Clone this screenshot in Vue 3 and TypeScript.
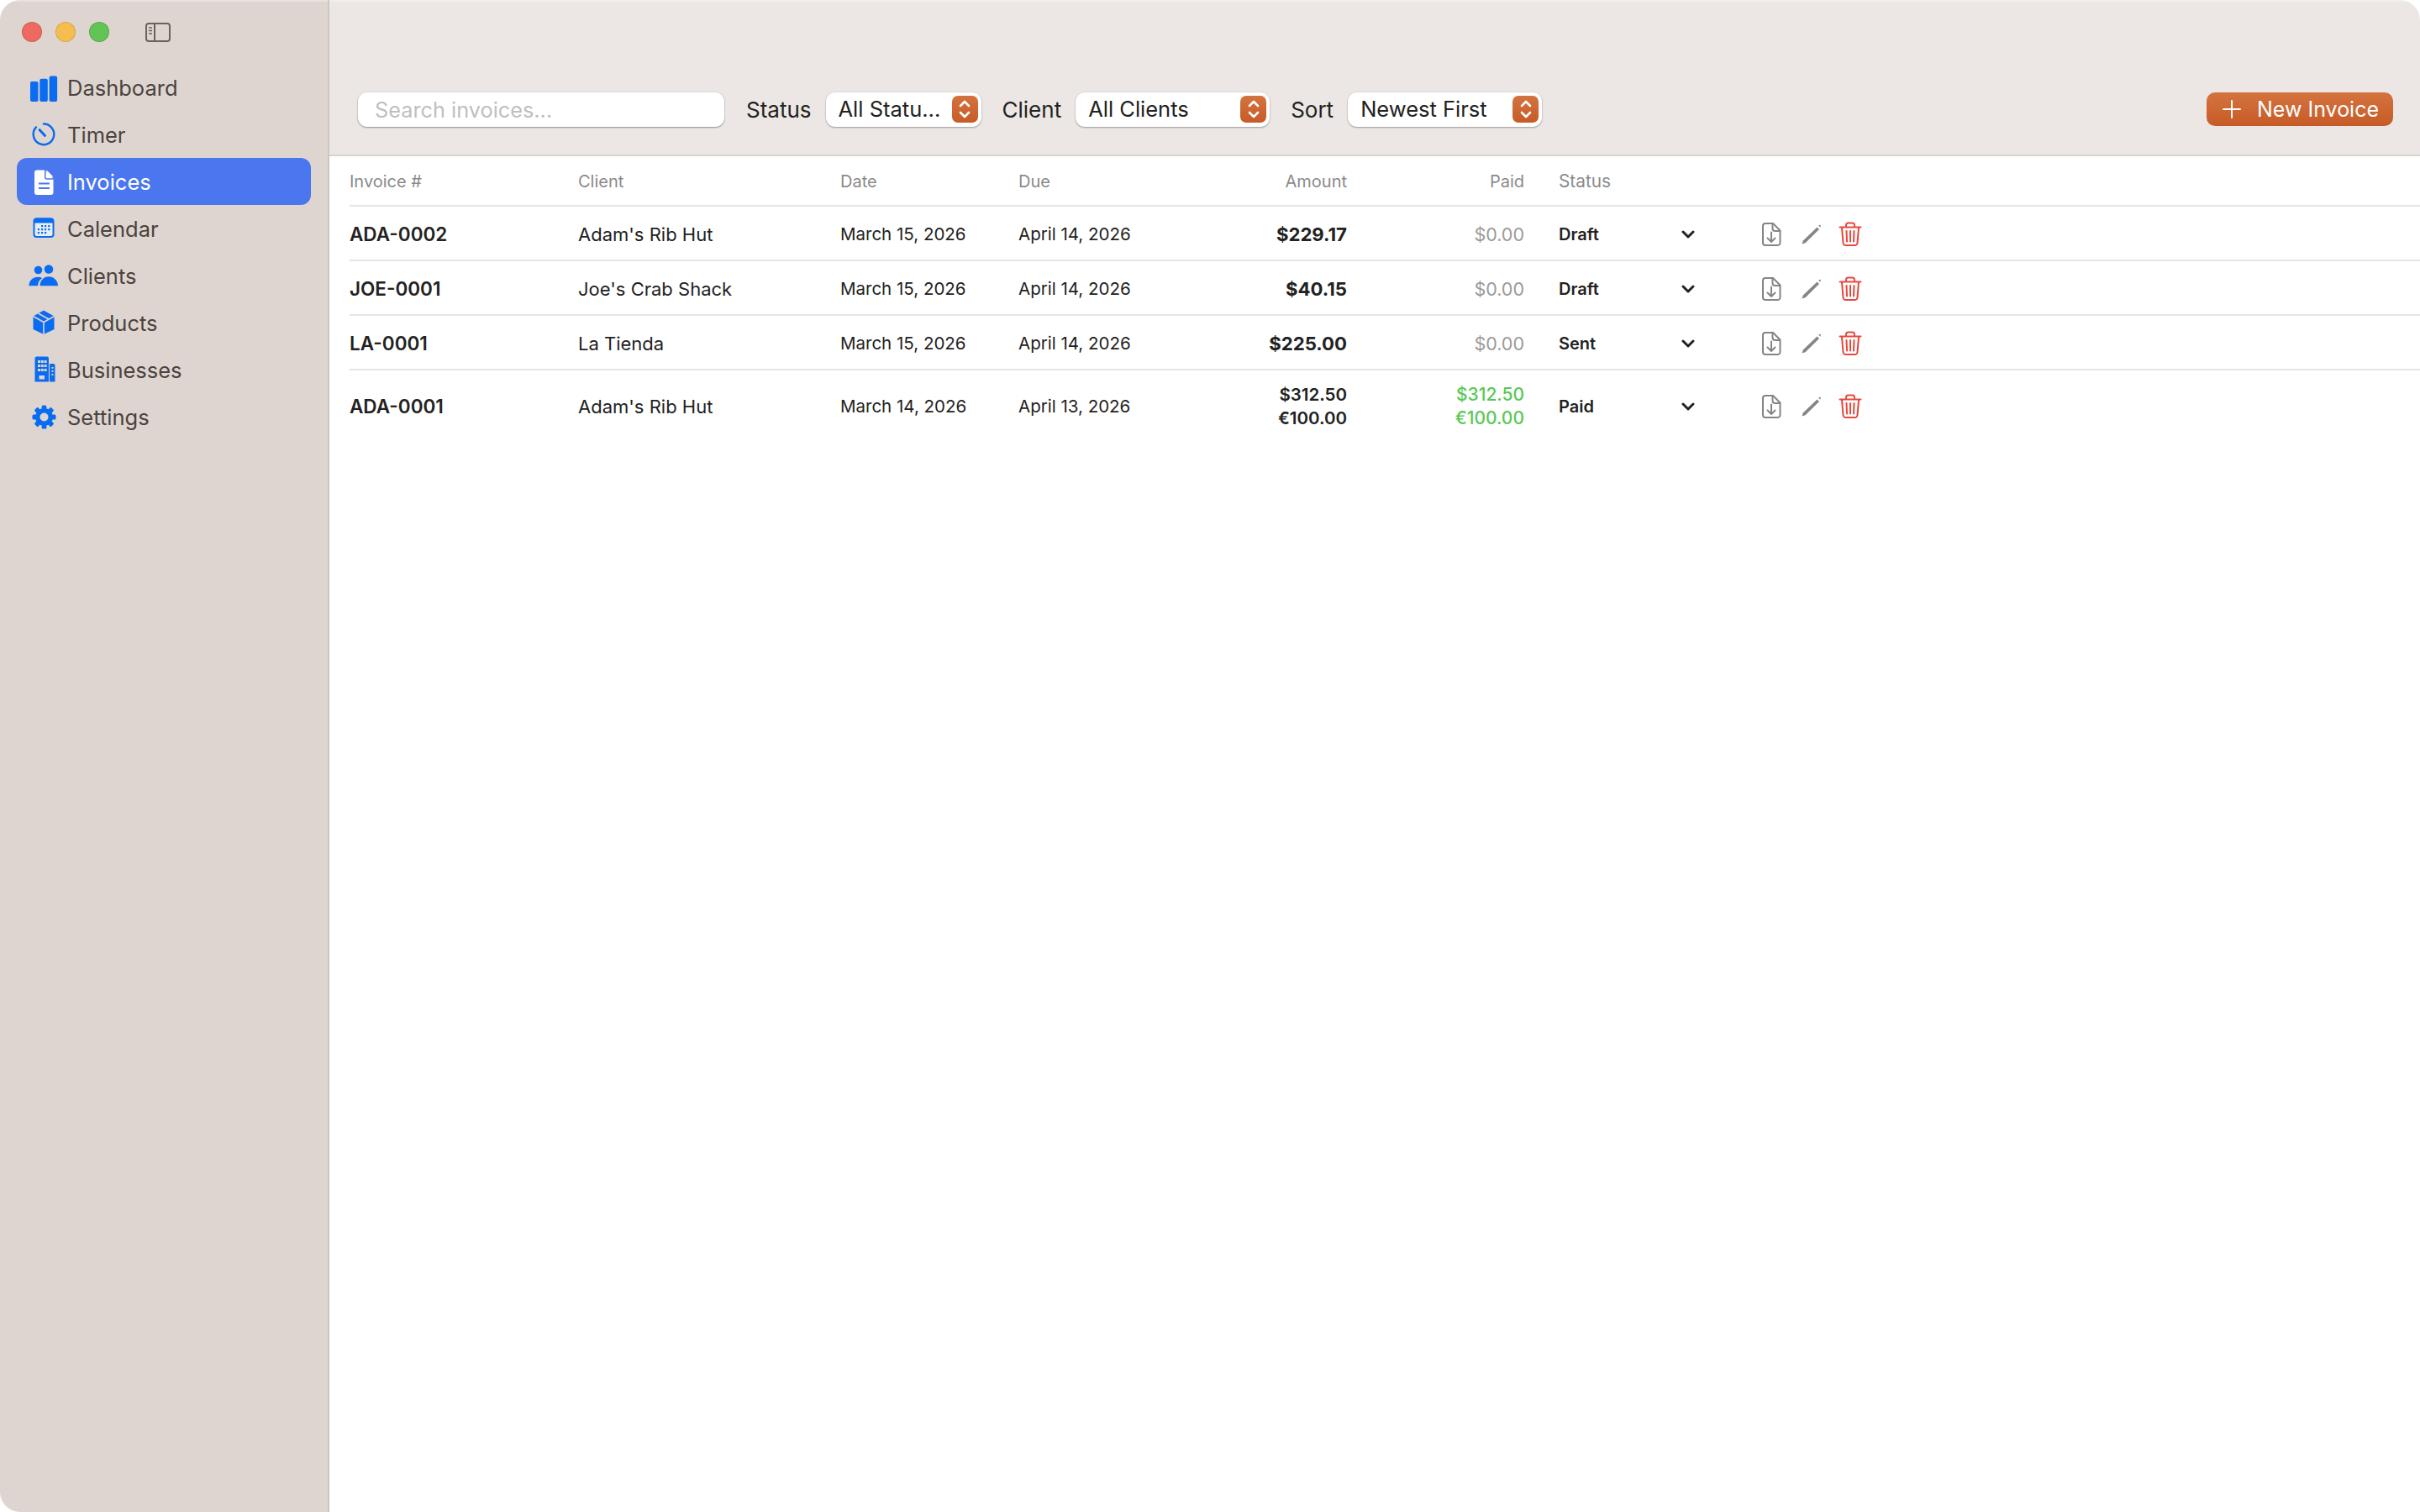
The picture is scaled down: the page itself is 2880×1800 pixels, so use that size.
<script setup lang="ts">
import { ref } from 'vue';

interface Invoice {
  id: string;
  client: string;
  date: string;
  due: string;
  amounts: string[];
  paid: string[];
  status: string;
}

const navItems = ['Dashboard', 'Timer', 'Invoices', 'Calendar', 'Clients', 'Products', 'Businesses', 'Settings'];
const active = ref('Invoices');

const filters = [
  { label: 'Status', value: 'All Statu...', kind: 'narrow' },
  { label: 'Client', value: 'All Clients', kind: 'wide' },
  { label: 'Sort', value: 'Newest First', kind: 'wide' },
];

const invoices: Invoice[] = [
  { id: 'ADA-0002', client: "Adam's Rib Hut", date: 'March 15, 2026', due: 'April 14, 2026', amounts: ['$229.17'], paid: ['$0.00'], status: 'Draft' },
  { id: 'JOE-0001', client: "Joe's Crab Shack", date: 'March 15, 2026', due: 'April 14, 2026', amounts: ['$40.15'], paid: ['$0.00'], status: 'Draft' },
  { id: 'LA-0001', client: 'La Tienda', date: 'March 15, 2026', due: 'April 14, 2026', amounts: ['$225.00'], paid: ['$0.00'], status: 'Sent' },
  { id: 'ADA-0001', client: "Adam's Rib Hut", date: 'March 14, 2026', due: 'April 13, 2026', amounts: ['$312.50', '€100.00'], paid: ['$312.50', '€100.00'], status: 'Paid' },
];
</script>

<template>
  <div class="window">
    <aside class="sidebar">
      <div class="titlebar">
        <span class="light light-close"></span>
        <span class="light light-min"></span>
        <span class="light light-max"></span>
        <svg class="toggle" width="32" height="25" viewBox="0 0 32 25" fill="none" stroke="#6b625d" stroke-width="2">
          <rect x="2" y="2" width="28" height="21" rx="3" />
          <path d="M12 2v21" />
          <path d="M5 7h4M5 10.500h4M5 14h4" stroke-width="1.500" />
        </svg>
      </div>
      <nav class="nav">
        <div v-for="item in navItems" :key="item" class="nav-item" :class="{ active: active === item }">
          <svg class="nav-icon" width="36" height="36" viewBox="0 0 36 36">
            <g v-if="item === 'Dashboard'" fill="#0a6cf0">
              <rect x="2" y="11" width="9.500" height="24" rx="2" />
              <rect x="13.300" y="7.700" width="9.500" height="27.300" rx="2" />
              <rect x="24.600" y="4.400" width="9.500" height="30.600" rx="2" />
            </g>
            <g v-else-if="item === 'Timer'" fill="none" stroke="#0a6cf0" stroke-width="2.400" stroke-linecap="round">
              <path d="M18 5.500A12.300 12.300 0 1 1 9 9.400" />
              <path d="M19.500 19.500L13 12.500" stroke-width="3" />
            </g>
            <g v-else-if="item === 'Invoices'">
              <path d="M10 4.500h9.500L29.500 14.500v16.500a3 3 0 0 1-3 3H10a3 3 0 0 1-3-3V7.500a3 3 0 0 1 3-3z" fill="#fff" />
              <path d="M21.500 4.500l8 8h-6a2 2 0 0 1-2-2z" fill="#fff" />
              <path d="M19.800 4.200V13a2 2 0 0 0 2 2h8" fill="none" stroke="#4a76ee" stroke-width="1.500" />
              <path d="M12 20.500h13M12 26h13" stroke="#4a76ee" stroke-width="2" />
            </g>
            <g v-else-if="item === 'Calendar'">
              <rect x="6.500" y="6.500" width="23" height="21.500" rx="3" fill="#e8eef8" stroke="#0a6cf0" stroke-width="2" />
              <path d="M6 9a3.500 3.500 0 0 1 3.500-3.500h17A3.500 3.500 0 0 1 30 9v2.500H6z" fill="#0a6cf0" />
              <g fill="#0a6cf0">
                <rect x="15" y="14" width="2.200" height="2.200" /><rect x="19" y="14" width="2.200" height="2.200" /><rect x="23.200" y="14" width="2.200" height="2.200" />
                <rect x="10.800" y="18" width="2.200" height="2.200" /><rect x="15" y="18" width="2.200" height="2.200" /><rect x="19" y="18" width="2.200" height="2.200" /><rect x="23.200" y="18" width="2.200" height="2.200" />
                <rect x="10.800" y="22" width="2.200" height="2.200" /><rect x="15" y="22" width="2.200" height="2.200" /><rect x="19" y="22" width="2.200" height="2.200" />
              </g>
            </g>
            <g v-else-if="item === 'Clients'" fill="#0a6cf0">
              <circle cx="11.500" cy="11.500" r="4.800" />
              <circle cx="24" cy="10.500" r="5.300" />
              <path d="M0.500 30.200c0-6 4.500-10.500 10.500-10.500 2 0 3.800.5 5.200 1.300-3 1.900-5.100 5.300-5.200 9.200z" />
              <path d="M13.500 30.200c0-6.200 4.700-11 10.500-11s11 4.800 11 11z" />
            </g>
            <g v-else-if="item === 'Products'">
              <path d="M18 3.500l12.500 7v15.500L18 32 5.500 26V10.500z" fill="#0a6cf0" />
              <path d="M5.500 10.500L18 17.500l12.500-7M18 17.500V32M11.500 7l12.500 7" fill="none" stroke="#dfd5d0" stroke-width="1.600" />
            </g>
            <g v-else-if="item === 'Businesses'">
              <path d="M7.500 4.500a2 2 0 0 1 2-2H22a2 2 0 0 1 2 2V32.500H7.500z" fill="#0a6cf0" />
              <path d="M25 11h4.500a2 2 0 0 1 2 2v19.500H25z" fill="#0a6cf0" />
              <g fill="#dfd5d0">
                <rect x="11" y="7" width="3" height="3" /><rect x="14.800" y="7" width="3" height="3" /><rect x="18.600" y="7" width="3" height="3" />
                <rect x="11" y="12" width="3" height="3" /><rect x="14.800" y="12" width="3" height="3" /><rect x="18.600" y="12" width="3" height="3" />
                <rect x="11" y="17" width="3" height="3" /><rect x="14.800" y="17" width="3" height="3" /><rect x="18.600" y="17" width="3" height="3" />
                <rect x="12.500" y="25" width="6.500" height="4.500" />
                <rect x="27.500" y="15" width="2" height="1.800" /><rect x="27.500" y="19" width="2" height="1.800" /><rect x="27.500" y="23" width="2" height="1.800" />
              </g>
            </g>
            <g v-else-if="item === 'Settings'">
              <g fill="#0a6cf0">
                <circle cx="18.500" cy="18.500" r="10.500" />
                <g v-for="a in [0, 45, 90, 135, 180, 225, 270, 315]" :key="a" :transform="`rotate(${a} 18.500 18.500)`">
                  <rect x="15.600" y="4.500" width="5.800" height="6" rx="1.500" />
                </g>
              </g>
              <circle cx="18.500" cy="18.500" r="5" fill="#dfd5d0" />
            </g>
          </svg>
          <span>{{ item }}</span>
        </div>
      </nav>
    </aside>

    <main class="content">
      <header class="toolbar">
        <input class="search" type="text" placeholder="Search invoices..." />
        <template v-for="f in filters" :key="f.label">
          <span class="filter-label">{{ f.label }}</span>
          <div class="select" :class="f.kind">
            <span class="select-value">{{ f.value }}</span>
            <span class="stepper">
              <svg width="16" height="26" viewBox="0 0 16 26" fill="none" stroke="#fff" stroke-width="2.600" stroke-linecap="round" stroke-linejoin="round">
                <path d="M3 9l5-5 5 5M3 17l5 5 5-5" />
              </svg>
            </span>
          </div>
        </template>
        <button class="new-btn">
          <svg width="22" height="22" viewBox="0 0 22 22" stroke="#fff" stroke-width="2" stroke-linecap="round"><path d="M11 1v20M1 11h20" /></svg>
          <span>New Invoice</span>
        </button>
      </header>

      <section class="table">
        <div class="row head">
          <span>Invoice #</span>
          <span>Client</span>
          <span>Date</span>
          <span>Due</span>
          <span class="right">Amount</span>
          <span class="right">Paid</span>
          <span class="status">Status</span>
        </div>
        <div v-for="inv in invoices" :key="inv.id" class="row body" :class="{ multi: inv.amounts.length > 1 }">
          <span class="inv-id">{{ inv.id }}</span>
          <span class="client">{{ inv.client }}</span>
          <span class="date">{{ inv.date }}</span>
          <span class="date">{{ inv.due }}</span>
          <div class="right amount">
            <div v-for="a in inv.amounts" :key="a">{{ a }}</div>
          </div>
          <div class="right paid" :class="{ settled: inv.status === 'Paid' }">
            <div v-for="p in inv.paid" :key="p">{{ p }}</div>
          </div>
          <span class="status status-val">{{ inv.status }}</span>
          <svg class="chev" width="16" height="10" viewBox="0 0 16 10" fill="none" stroke="#222" stroke-width="3" stroke-linecap="round" stroke-linejoin="round">
            <path d="M2 2l6 6 6-6" />
          </svg>
          <div class="actions">
            <svg width="28" height="30" viewBox="0 0 28 30" fill="none" stroke="#858585" stroke-width="2" stroke-linejoin="round" stroke-linecap="round">
              <path d="M7 2h9l8.500 8.500V25a3 3 0 0 1-3 3H7a3 3 0 0 1-3-3V5a3 3 0 0 1 3-3z" />
              <path d="M15.500 2.500V8a3 3 0 0 0 3 3h5.500" />
              <path d="M14 12.500V24M9.500 19.500L14 24l4.500-4.500" />
            </svg>
            <svg width="28" height="30" viewBox="0 0 28 30" fill="#858585">
              <path d="M21.500 6.500l2.500 2.500L7.500 25.200l-4 1.300 1.300-3.900z" />
              <path d="M23 4.500l2.200-.7.700.7-.7 2.200z" />
            </svg>
            <svg width="28" height="30" viewBox="0 0 28 30" fill="none" stroke="#e8493f" stroke-width="2" stroke-linecap="round" stroke-linejoin="round">
              <path d="M1.500 6.500h25" />
              <path d="M9 6V4a2.500 2.500 0 0 1 2.500-2.500h5A2.500 2.500 0 0 1 19 4v2" />
              <path d="M4 7l1.500 18a3 3 0 0 0 3 3h11a3 3 0 0 0 3-3L24 7" />
              <path d="M9.500 11l.5 12.500M14 11v12.500M18.500 11L18 23.500" />
            </svg>
          </div>
        </div>
      </section>
    </main>
  </div>
</template>

<style>
html,
body {
  margin: 0;
  background: #fff;
}
</style>

<style scoped>
.window {
  display: flex;
  width: 2880px;
  height: 1800px;
  overflow: hidden;
  border-radius: 24px;
  font-family: Inter, "Liberation Sans", sans-serif;
  color: #222;
  background: #fff;
}

.sidebar {
  box-sizing: border-box;
  width: 392px;
  flex-shrink: 0;
  padding: 0 20px;
  background: #dfd5d0;
  border-right: 2px solid #cbc6c2;
  box-shadow: inset 0 2px 0 rgba(255, 255, 255, 0.3);
}

.titlebar {
  display: flex;
  align-items: center;
  gap: 16px;
  height: 76px;
  padding-left: 6px;
}

.light {
  width: 24px;
  height: 24px;
  border-radius: 50%;
  box-sizing: border-box;
  border: 1px solid rgba(0, 0, 0, 0.12);
}
.light-close { background: #ee6a5f; }
.light-min { background: #f5bd4f; }
.light-max { background: #61c454; }

.toggle {
  margin-left: 26px;
}

.nav-item {
  display: flex;
  align-items: center;
  gap: 10px;
  height: 56px;
  padding-left: 14px;
  border-radius: 12px;
  font-size: 25.500px;
  color: #4a4340;
}

.nav-item.active {
  background: #4a76ee;
  color: #fff;
}

.nav-icon {
  flex-shrink: 0;
}

.content {
  flex: 1;
  min-width: 0;
}

.toolbar {
  box-sizing: border-box;
  display: flex;
  align-items: center;
  height: 186px;
  padding: 76px 32px 0 34px;
  background: #ece7e4;
  border-bottom: 2px solid #d6d1cd;
  box-shadow: inset 0 2px 0 rgba(255, 255, 255, 0.3);
}

.search {
  box-sizing: border-box;
  width: 436px;
  height: 41px;
  padding: 0 20px;
  margin-right: 26px;
  border: none;
  outline: none;
  border-radius: 11px;
  font: 25.300px Inter, "Liberation Sans", sans-serif;
  background: #fff;
  box-shadow: 0 1px 2px rgba(0, 0, 0, 0.35), 0 0 0 1px rgba(0, 0, 0, 0.04);
}

.search::placeholder {
  color: #bfbfbf;
}

.filter-label {
  font-size: 26px;
  margin-right: 17px;
  color: #222;
}

.select {
  box-sizing: border-box;
  display: flex;
  align-items: center;
  justify-content: space-between;
  height: 41px;
  padding: 0 4px 0 15px;
  margin-right: 25px;
  border-radius: 11px;
  background: #fff;
  font-size: 25.500px;
  box-shadow: 0 1px 2px rgba(0, 0, 0, 0.3), 0 0 0 1px rgba(0, 0, 0, 0.04);
}

.select-value {
  white-space: nowrap;
  padding-bottom: 2px;
}

.select.narrow { width: 185px; }
.select.wide { width: 231px; }

.stepper {
  display: flex;
  align-items: center;
  justify-content: center;
  flex-shrink: 0;
  width: 31px;
  height: 32px;
  border-radius: 7px;
  background: linear-gradient(#d4733f, #c75b27);
}

.new-btn {
  display: flex;
  align-items: center;
  gap: 19px;
  box-sizing: border-box;
  width: 222px;
  height: 40px;
  margin-left: auto;
  padding: 0 0 0 19px;
  border: none;
  border-radius: 10px;
  background: linear-gradient(#d4733f, #c75b27);
  color: #fff;
  font: 25px Inter, "Liberation Sans", sans-serif;
}

.table {
  margin-left: 24px;
}

.row {
  display: grid;
  grid-template-columns: 272px 312px 212px 180px 211px 211px 176px 38px 200px;
  align-items: center;
  border-bottom: 2px solid #e5e5e5;
}

.row.head {
  box-sizing: border-box;
  height: 60px;
  padding-top: 1px;
  font-size: 20px;
  color: #8a8a8a;
}

.row.head .status {
  font-size: 20.800px;
}

.row.body {
  box-sizing: border-box;
  height: 65px;
  padding-top: 2px;
  font-size: 22px;
}

.row.body.multi {
  height: 86px;
  padding-top: 0;
  border-bottom: none;
  line-height: 28px;
}

.right {
  text-align: right;
}

.status {
  padding-left: 41px;
}

.inv-id {
  font-size: 22.500px;
  font-weight: 600;
}

.date {
  font-size: 20.500px;
}

.amount {
  font-weight: 700;
  font-size: 22.200px;
}

.multi .amount {
  font-weight: 600;
  font-size: 20.500px;
}

.paid {
  font-size: 21.500px;
  color: #9a9a9a;
}

.paid.settled {
  color: #5ac856;
  font-size: 21px;
  font-weight: 500;
}

.status-val {
  font-size: 20px;
  font-weight: 600;
}

.chev {
  justify-self: center;
}

.actions {
  display: flex;
  gap: 19px;
  padding-left: 66px;
}
</style>
